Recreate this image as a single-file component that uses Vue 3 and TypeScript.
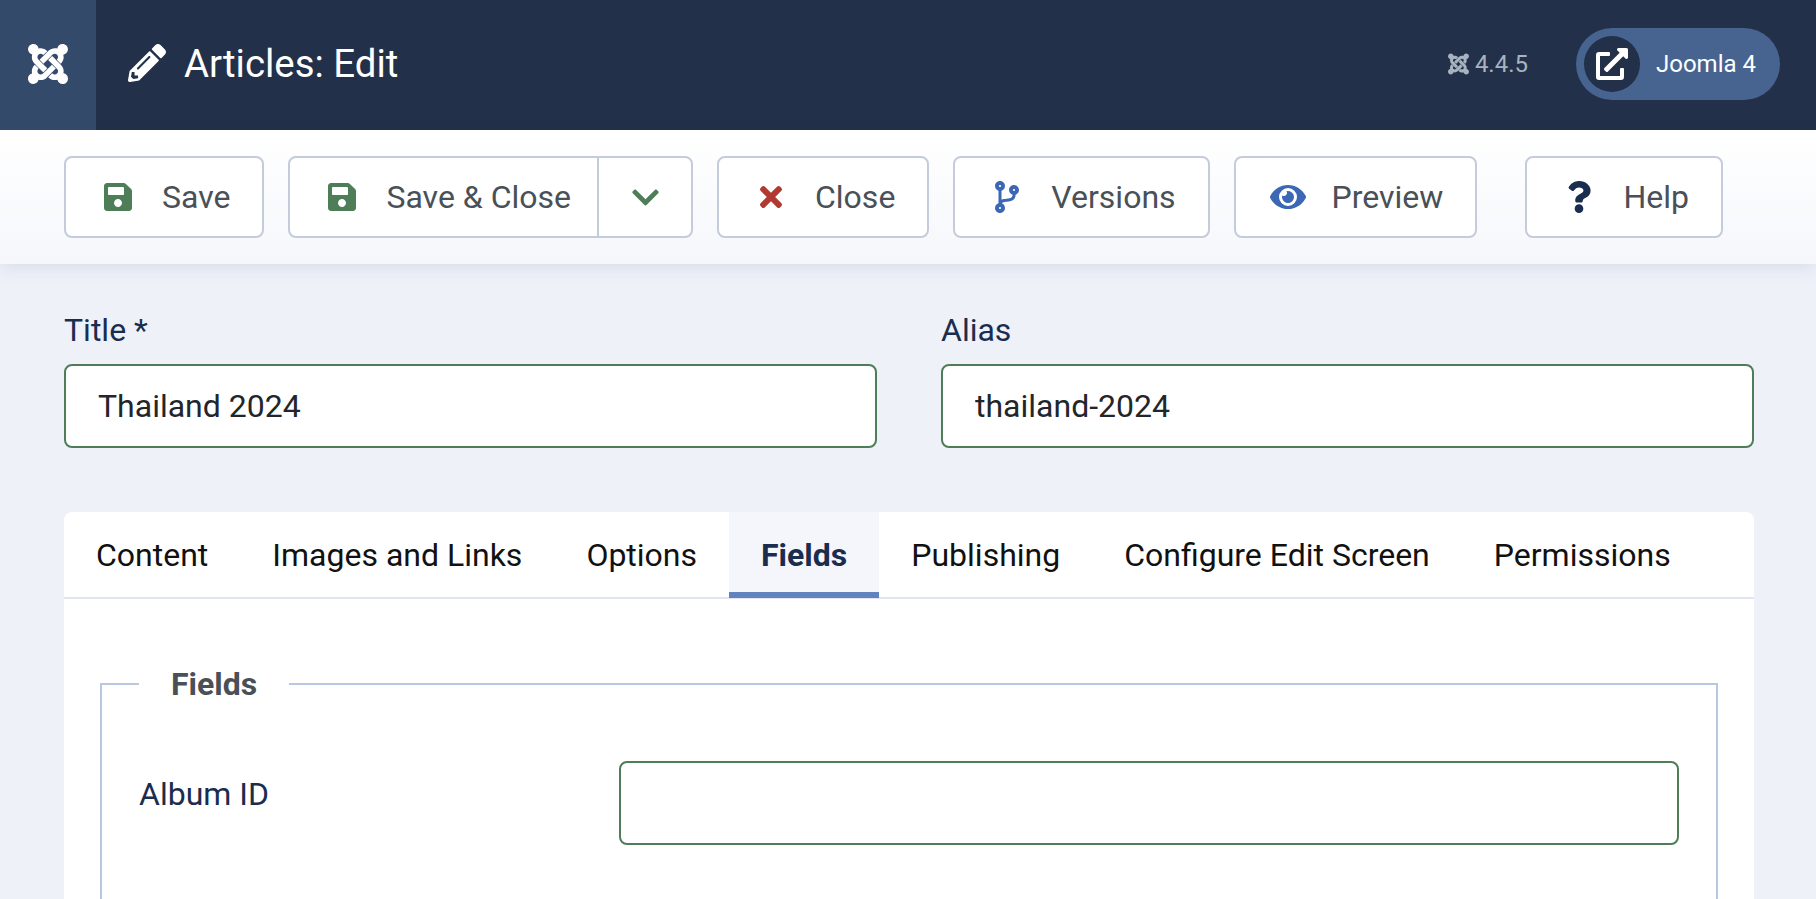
<template>
  <div class="page">
    <header class="topbar">
      <div class="logo">
        <svg class="joomla" viewBox="0 0 448 512"><path fill="currentColor" :d="icons.joomla" /></svg>
      </div>
      <svg class="pencil" viewBox="0 0 512 512"><path fill="currentColor" :d="icons.pencil" /></svg>
      <h1 class="page-title">Articles: Edit</h1>
      <div class="version">
        <svg viewBox="0 0 448 512"><path fill="currentColor" :d="icons.joomla" /></svg>
        <span>4.4.5</span>
      </div>
      <a class="site-link">
        <span class="site-icon">
          <svg viewBox="0 0 512 512"><path fill="currentColor" :d="icons.external" /></svg>
        </span>
        <span>Joomla 4</span>
      </a>
    </header>

    <div class="toolbar">
      <template v-for="btn in buttons" :key="btn.label">
        <div class="btn" :class="{ 'btn-help': btn.label === 'Help' }">
          <span class="btn-main" :class="{ split: btn.dropdown }">
            <span class="btn-icon" :style="{ color: btn.color }">
              <svg :viewBox="btn.box"><path fill="currentColor" :d="btn.path" /></svg>
            </span>
            <span>{{ btn.label }}</span>
          </span>
          <span v-if="btn.dropdown" class="btn-drop">
            <svg viewBox="0 0 448 512"><path fill="currentColor" :d="icons.chevron" /></svg>
          </span>
        </div>
      </template>
    </div>

    <main class="content">
      <div class="title-row">
        <div class="field">
          <label>Title *</label>
          <input v-model="title" type="text" />
        </div>
        <div class="field">
          <label>Alias</label>
          <input v-model="alias" type="text" />
        </div>
      </div>

      <section class="card">
        <nav class="tabs">
          <button v-for="tab in tabs" :key="tab" class="tab" :class="{ active: tab === activeTab }" @click="activeTab = tab">
            {{ tab }}
          </button>
        </nav>
        <div class="panel">
          <fieldset class="fields">
            <legend>Fields</legend>
            <div class="field-row">
              <label>Album ID</label>
              <input v-model="albumId" type="text" />
            </div>
          </fieldset>
        </div>
      </section>
    </main>
  </div>
</template>

<script setup lang="ts">
import { ref } from 'vue'

const icons = {
  joomla: 'M.6 92.1C.6 58.8 27.4 32 60.4 32c30 0 54.5 21.9 59.2 50.2 32.6-7.6 67.1.6 96.5 30l-44.3 44.3c-20.5-20.5-42.6-16.3-55.4-3.5-14.3 14.3-14.3 37.9 0 52.2l99.5 99.5-44 44.3c-87.7-87.2-49.7-49.7-99.8-99.7-26.8-26.5-35-64.8-24.8-98.9C20.4 144.6.6 120.7.6 92.1zm129.5 116.4l44.3 44.3c10-10 89.7-89.7 99.7-99.8 14.3-14.3 37.6-14.3 51.9 0 12.8 12.8 17 35-3.5 55.4l44 44.3c31.2-31.2 38.5-67.6 28.9-101.2 29.2-4.1 51.9-29.2 51.9-59.5 0-33.2-26.8-60.1-59.8-60.1-30.3 0-55.4 22.5-59.5 51.6-33.8-9.9-71.7-1.5-98.3 25.1-18.3 19.1-71.1 71.5-99.6 99.9zm266.3 152.2c8.2-32.7-.9-68.5-26.3-93.9-11.8-12.2 5 4.7-99.5-99.7l-44.3 44.3 99.7 99.7c14.3 14.3 14.3 37.6 0 51.9-12.8 12.8-35 17-55.4-3.5l-44 44.3c27.6 30.2 68 38.8 102.7 28 5.5 27.4 29.7 48.1 58.9 48.1 33 0 59.8-26.8 59.8-60.1 0-30.2-22.5-55-51.6-59.1zm-84.3-53.1l-44.3-44.3c-87.2 86-50.3 50-99.8 99.7-14.3 14.3-37.6 14.3-51.9 0-13.1-13.4-16.9-35.3 3.2-55.4l-44-44.3c-30.2 30.2-38 65.2-29.5 98.3-26.7 6.1-46.6 30-46.6 58.5C0 453.2 26.8 480 59.8 480c28.6 0 52.5-19.8 58.6-46.7 32.7 8.2 68.5-.6 94.2-26 32.1-32 12.2-12.4 99.5-99.7z',
  pencil: 'M497.9 142.1l-46.1 46.1c-4.7 4.7-12.3 4.7-17 0l-111-111c-4.7-4.7-4.7-12.3 0-17l46.1-46.1c18.7-18.7 49.1-18.7 67.9 0l60.1 60.1c18.8 18.7 18.8 49.1 0 67.9zM284.2 99.8L21.6 362.4.4 483.9c-2.9 16.4 11.4 30.6 27.8 27.8l121.5-21.3 262.6-262.6c4.7-4.7 4.7-12.3 0-17l-111-111c-4.8-4.7-12.4-4.7-17.1 0zM124.1 339.9c-5.5-5.5-5.5-14.3 0-19.8l154-154c5.5-5.5 14.3-5.5 19.8 0s5.5 14.3 0 19.8l-154 154c-5.5 5.5-14.3 5.5-19.8 0zM88 424h48v36.3l-64.5 11.3-31.1-31.1L51.7 376H88v48z',
  external: 'M432,320H400a16,16,0,0,0-16,16V448H64V128H208a16,16,0,0,0,16-16V80a16,16,0,0,0-16-16H48A48,48,0,0,0,0,112V464a48,48,0,0,0,48,48H400a48,48,0,0,0,48-48V336A16,16,0,0,0,432,320ZM488,0h-128c-21.37,0-32.05,25.91-17,41l35.73,35.73L135,320.37a24,24,0,0,0,0,34L157.67,377a24,24,0,0,0,34,0L435.28,133.32,471,169c15,15,41,4.5,41-17V24A24,24,0,0,0,488,0Z',
  chevron: 'M207.029 381.476L12.686 187.132c-9.373-9.373-9.373-24.569 0-33.941l22.667-22.667c9.357-9.357 24.522-9.375 33.901-.04L224 284.505l154.745-154.021c9.379-9.335 24.544-9.317 33.901.04l22.667 22.667c9.373 9.373 9.373 24.569 0 33.941L240.971 381.476c-9.373 9.372-24.569 9.372-33.942 0z',
  save: 'M433.941 129.941l-83.882-83.882A48 48 0 0 0 316.118 32H48C21.49 32 0 53.49 0 80v352c0 26.51 21.49 48 48 48h352c26.51 0 48-21.49 48-48V163.882a48 48 0 0 0-14.059-33.941zM224 416c-35.346 0-64-28.654-64-64 0-35.346 28.654-64 64-64s64 28.654 64 64c0 35.346-28.654 64-64 64zm96-304.52V212c0 6.627-5.373 12-12 12H76c-6.627 0-12-5.373-12-12V108c0-6.627 5.373-12 12-12h228.52c3.183 0 6.235 1.264 8.485 3.515l3.48 3.48A11.996 11.996 0 0 1 320 111.48z',
  times: 'M242.72 256l100.07-100.07c12.28-12.28 12.28-32.19 0-44.48l-22.24-22.24c-12.28-12.28-32.19-12.28-44.48 0L176 189.28 75.93 89.21c-12.28-12.28-32.19-12.28-44.48 0L9.21 111.45c-12.28 12.28-12.28 32.19 0 44.48L109.28 256 9.21 356.07c-12.28 12.28-12.28 32.19 0 44.48l22.24 22.24c12.28 12.28 32.2 12.28 44.48 0L176 322.72l100.07 100.07c12.28 12.28 32.2 12.28 44.48 0l22.24-22.24c12.28-12.28 12.28-32.19 0-44.48L242.72 256z',
  branch: 'M384 144c0-44.2-35.8-80-80-80s-80 35.8-80 80c0 36.4 24.3 67.1 57.5 76.8-.6 16.1-4.2 28.5-11 36.9-15.4 19.2-49.3 22.4-85.2 25.7-28.2 2.6-57.4 5.4-81.3 16.9v-144c32.5-10.2 56-40.5 56-76.3 0-44.2-35.8-80-80-80S0 35.8 0 80c0 35.8 23.5 66.1 56 76.3v199.3C23.5 365.9 0 396.2 0 432c0 44.2 35.8 80 80 80s80-35.8 80-80c0-34-21.2-63.1-51.2-74.6 3.1-5.2 7.8-9.8 14.9-13.4 16.2-8.2 40.4-10.4 66.1-12.8 42.2-3.9 90-8.4 118.2-43.4 14-17.4 21.1-39.8 21.6-67.9 31.6-10.8 54.4-40.7 54.4-75.9zM80 64c8.8 0 16 7.2 16 16s-7.2 16-16 16-16-7.2-16-16 7.2-16 16-16zm0 384c-8.8 0-16-7.2-16-16s7.2-16 16-16 16 7.2 16 16-7.2 16-16 16zm224-320c8.8 0 16 7.2 16 16s-7.2 16-16 16-16-7.2-16-16 7.2-16 16-16z',
  eye: 'M572.52 241.4C518.29 135.59 410.93 64 288 64S57.68 135.64 3.48 241.41a32.35 32.35 0 0 0 0 29.19C57.71 376.41 165.07 448 288 448s230.32-71.64 284.52-177.41a32.35 32.35 0 0 0 0-29.19zM288 400a144 144 0 1 1 144-144 143.93 143.93 0 0 1-144 144zm0-240a95.31 95.31 0 0 0-25.31 3.79 47.85 47.85 0 0 1-66.9 66.9A95.78 95.78 0 1 0 288 160z',
  question: 'M202.021 0C122.202 0 70.503 32.703 29.914 91.026c-7.363 10.58-5.093 25.086 5.178 32.874l43.138 32.709c10.373 7.865 25.132 6.026 33.253-4.148 25.049-31.381 43.63-49.449 82.757-49.449 30.764 0 68.816 19.799 68.816 49.631 0 22.552-18.617 34.134-48.993 51.164-35.423 19.86-82.299 44.576-82.299 106.405V320c0 13.255 10.745 24 24 24h72.471c13.255 0 24-10.745 24-24v-5.773c0-42.86 125.268-44.645 125.268-160.627C377.504 66.256 286.902 0 202.021 0zM192 373.459c-38.196 0-69.271 31.075-69.271 69.271 0 38.195 31.075 69.27 69.271 69.27s69.271-31.075 69.271-69.271-31.075-69.27-69.271-69.27z',
}

interface ToolbarButton {
  label: string
  path: string
  box: string
  color: string
  dropdown?: boolean
}

const buttons: ToolbarButton[] = [
  { label: 'Save', path: icons.save, box: '0 0 448 512', color: '#4e7d58' },
  { label: 'Save & Close', path: icons.save, box: '0 0 448 512', color: '#4e7d58', dropdown: true },
  { label: 'Close', path: icons.times, box: '0 0 352 512', color: '#b2392f' },
  { label: 'Versions', path: icons.branch, box: '0 0 384 512', color: '#3b67b5' },
  { label: 'Preview', path: icons.eye, box: '0 0 576 512', color: '#3b67b5' },
  { label: 'Help', path: icons.question, box: '0 0 384 512', color: '#1a2d4f' },
]

const tabs = ['Content', 'Images and Links', 'Options', 'Fields', 'Publishing', 'Configure Edit Screen', 'Permissions']
const activeTab = ref('Fields')

const title = ref('Thailand 2024')
const alias = ref('thailand-2024')
const albumId = ref('')
</script>

<style scoped>
.page {
  height: 899px;
  overflow: hidden;
  background: #eef1f8;
  font-family: Roboto, sans-serif;
  font-size: 32px;
  display: flex;
  flex-direction: column;
}

.topbar {
  height: 130px;
  flex: none;
  box-sizing: border-box;
  display: flex;
  align-items: center;
  background: #223049;
  color: #fff;
  padding: 0 36px 2px 0;
}

.logo {
  width: 96px;
  height: 130px;
  box-sizing: border-box;
  padding-bottom: 2px;
  align-self: flex-start;
  background: #344a6b;
  display: flex;
  align-items: center;
  justify-content: center;
}

.joomla {
  width: 40px;
  height: 46px;
}

.pencil {
  width: 38px;
  height: 38px;
  margin: 0 0 2px 32px;
}

.page-title {
  margin: 0 auto 2px 18px;
  font-size: 38.4px;
  font-weight: 400;
}

.version {
  display: flex;
  align-items: center;
  gap: 6px;
  margin-right: 48px;
  font-size: 24px;
  color: #a8b2c0;
}

.version svg {
  width: 21px;
  height: 24px;
}

.site-link {
  width: 204px;
  height: 72px;
  box-sizing: border-box;
  padding-left: 8px;
  display: flex;
  align-items: center;
  gap: 16px;
  border-radius: 36px;
  background: #476390;
  font-size: 24px;
}

.site-icon {
  width: 56px;
  height: 56px;
  border-radius: 50%;
  background: #223049;
  display: flex;
  align-items: center;
  justify-content: center;
}

.site-icon svg {
  width: 32px;
  height: 32px;
}

.toolbar {
  height: 134px;
  flex: none;
  box-sizing: border-box;
  display: flex;
  align-items: center;
  gap: 24px;
  padding: 0 64px;
  background: linear-gradient(#fff, #f5f7fb);
  box-shadow: 0 4px 16px rgba(40, 60, 110, 0.1);
  position: relative;
}

.btn {
  height: 82px;
  box-sizing: border-box;
  display: flex;
  background: #fff;
  border: 2px solid #c4cbdb;
  border-radius: 8px;
  color: #495057;
}

.btn-help {
  margin-left: 24px;
}

.btn-main {
  display: flex;
  align-items: center;
  padding: 0 32px 0 36px;
}

.btn-main.split {
  padding-right: 26px;
}

.btn-icon {
  width: 32px;
  margin-right: 28px;
  display: flex;
  justify-content: center;
}

.btn-icon svg {
  height: 32px;
  flex: none;
}

.btn-drop {
  width: 92px;
  border-left: 2px solid #c4cbdb;
  color: #4e7d58;
  display: flex;
  align-items: center;
  justify-content: center;
}

.btn-drop svg {
  width: 27px;
  height: 31px;
}

.content {
  padding: 0 62px 0 64px;
}

.title-row {
  display: flex;
  gap: 64px;
  margin-top: 46px;
}

.field {
  flex: 1;
  display: flex;
  flex-direction: column;
}

label {
  color: #1a2d4f;
  line-height: 40px;
}

.field label {
  margin-bottom: 14px;
}

input {
  height: 84px;
  box-sizing: border-box;
  padding: 0 32px;
  background: #fff;
  border: 2px solid #4e7d58;
  border-radius: 8px;
  color: #22262a;
  font-family: inherit;
  font-size: 32px;
  outline: none;
}

.field input {
  width: 100%;
}

.card {
  margin-top: 64px;
  background: #fff;
  border-radius: 8px 8px 0 0;
  height: 500px;
}

.tabs {
  height: 87px;
  box-sizing: border-box;
  display: flex;
  border-bottom: 2px solid #e0e5f0;
}

.tab {
  height: 86px;
  padding: 5px 32px 0;
  background: none;
  border: 0;
  border-bottom: 6px solid transparent;
  color: #111;
  font-family: inherit;
  font-size: 32px;
}

.tab.active {
  background: #f4f6fb;
  border-bottom-color: #6283bf;
  color: #1a2d4f;
  font-weight: 700;
}

.panel {
  padding: 61px 36px 0;
}

.fields {
  margin: 0;
  padding: 0 37px 200px;
  border: 2px solid #b8c8e0;
}

legend {
  margin-left: 0;
  padding: 0 32px;
  color: #495057;
  font-weight: 700;
  line-height: 48px;
}

.field-row {
  display: flex;
  margin-top: 53px;
}

.field-row label {
  width: 480px;
  flex: none;
  line-height: 67px;
}

.field-row input {
  flex: 1;
  min-width: 0;
}
</style>
